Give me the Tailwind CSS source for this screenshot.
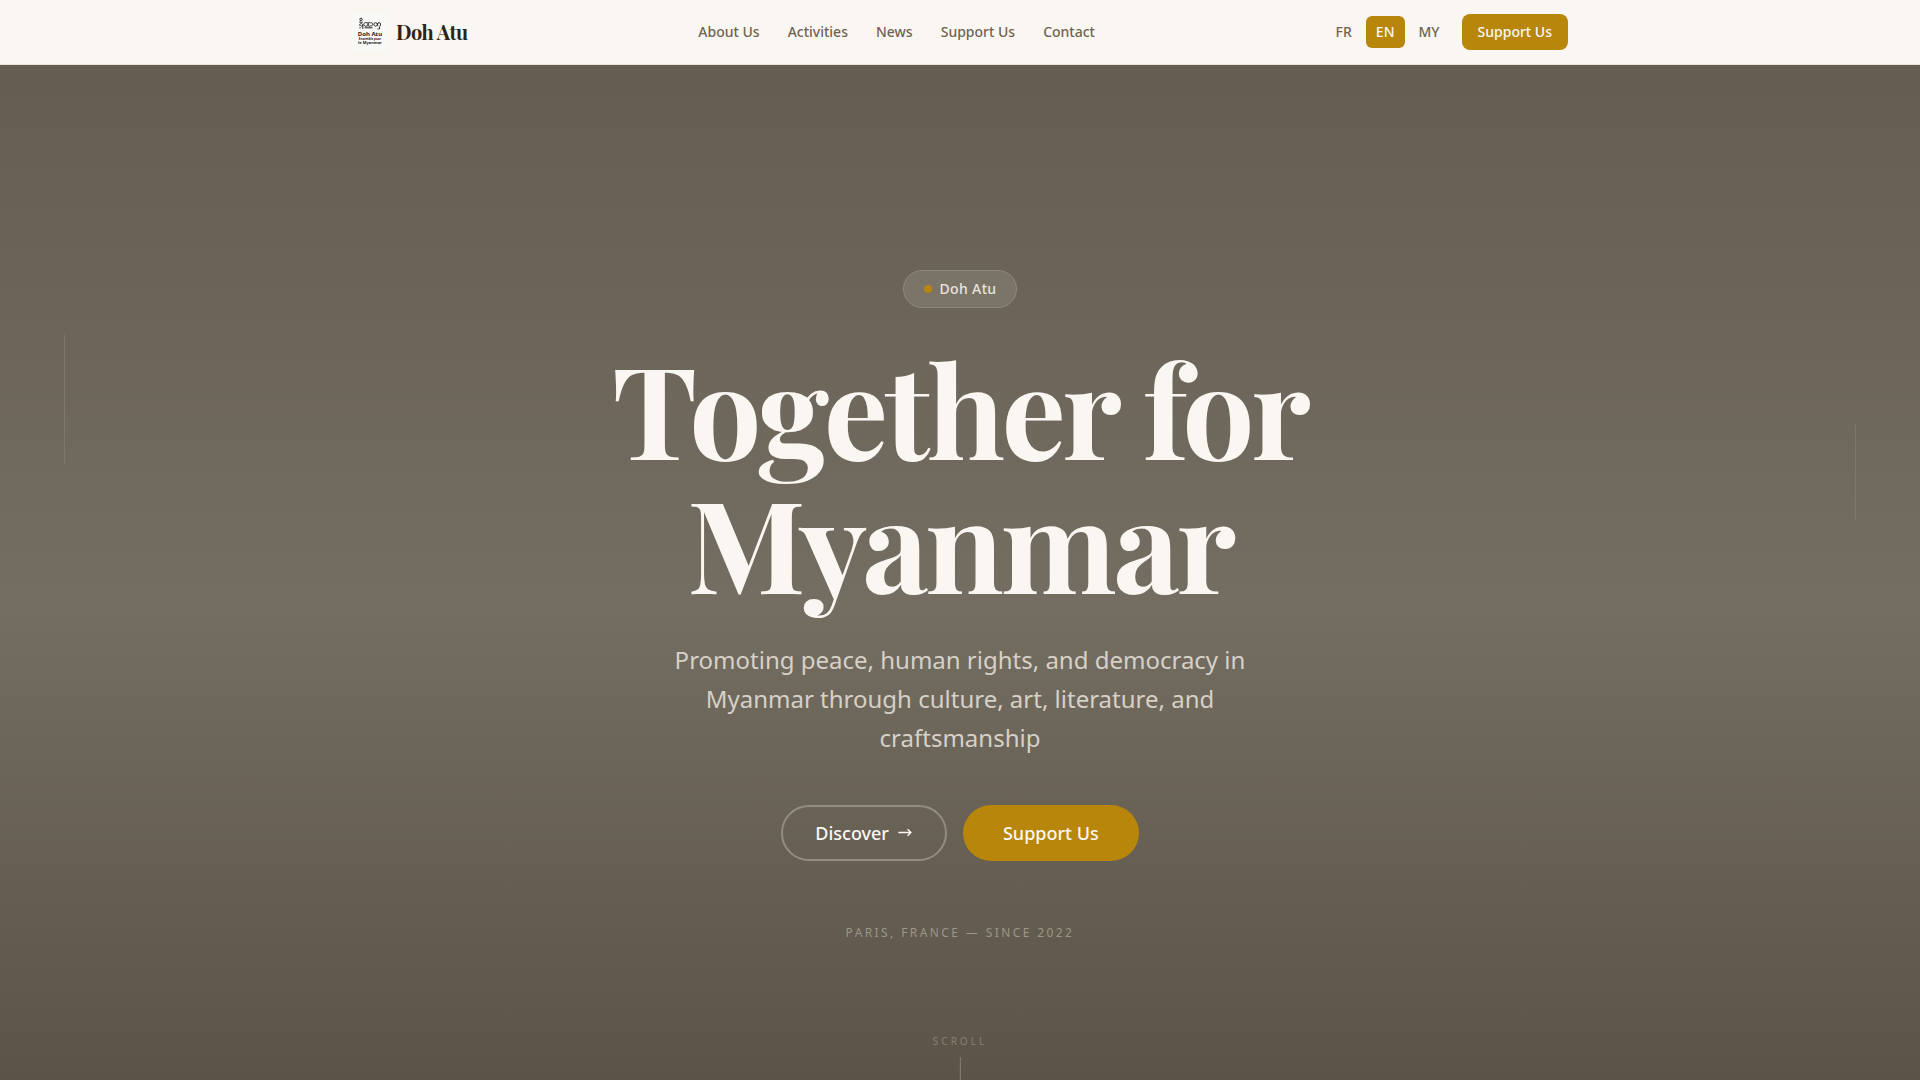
<!DOCTYPE html>
<html lang="en">
<head>
    <meta charset="UTF-8">
    <meta name="viewport" content="width=device-width, initial-scale=1.0">
    <title>Doh Atu - Together for Myanmar</title>
    <script src="https://cdn.jsdelivr.net/npm/@tailwindcss/browser@4"></script>
</head>
<body class="bg-[#faf7f2] font-['Noto_Sans',sans-serif] text-[#2c2416] antialiased">

<!-- Header -->
<header class="sticky top-0 z-10 border-b border-[#e8e2d8] bg-[#faf7f2]">
    <div class="mx-auto flex h-16 max-w-7xl items-center justify-between px-8">
        <a href="#" class="flex items-center gap-2">
            <svg class="size-9" viewBox="0 0 36 36" role="img" aria-label="Doh Atu logo">
                <rect width="36" height="36" fill="#f9f9f8"/>
                <g fill="none" stroke="#2a2a2a" stroke-width="1">
                    <circle cx="9" cy="5.4" r="1.2"/>
                    <path d="M7.2 8.2h3.6M7.4 11.5c0-2.4 3.4-2.4 3.4-.4 0 1.6-2.6 1.2-2.4 0M10.8 11v4M7.4 13.8h1.4"/>
                    <path d="M14.8 8.8a1.9 1.9 0 1 0 .1 3.1M14.8 8.8c2.4-.6 2.4 3.4.1 3.1M18.6 8.8a1.9 1.9 0 1 0 .1 3.1M18.6 8.8c2.8-.8 2.8 3.6.1 3.1M12.6 13.8h8"/>
                    <circle cx="23.6" cy="10.4" r="1.7"/>
                    <path d="M26.4 12.2c-1.4-1-1.2-3.6.6-3.6s2.2 2.4.8 3.6M27.6 12.4v2.8M25.4 15h1.4"/>
                </g>
                <g fill="#222" text-anchor="middle" font-family="Noto Sans, sans-serif" font-weight="700">
                    <text x="18" y="22" font-size="6">Doh Atu</text>
                    <text x="18" y="26" font-size="3">Ensemble pour</text>
                    <text x="18" y="30" font-size="4">le Myanmar</text>
                </g>
            </svg>
            <span class="font-['Playfair_Display','Liberation_Serif',serif] text-xl font-bold tracking-tight">Doh Atu</span>
        </a>

        <nav class="flex items-center gap-7 text-sm font-medium text-[#6f6353]">
            <a href="#about">About Us</a>
            <a href="#activities">Activities</a>
            <a href="#news">News</a>
            <a href="#support">Support Us</a>
            <a href="#contact">Contact</a>
        </nav>

        <div class="flex items-center gap-3 text-sm font-medium">
            <div class="flex items-center gap-1 text-[#6f6353]">
                <button type="button" class="h-8 rounded-md px-[10px]">FR</button>
                <button type="button" class="h-8 rounded-md bg-[#b8860b] px-[10px] text-[#faf7f2]">EN</button>
                <button type="button" class="h-8 rounded-md px-[10px]">MY</button>
            </div>
            <a href="#support" class="rounded-lg bg-[#b8860b] px-4 py-2 text-[#faf7f2]">Support Us</a>
        </div>
    </div>
</header>

<!-- Hero -->
<section class="relative flex h-screen flex-col items-center justify-center overflow-hidden bg-linear-to-b from-[#655d51] via-[#746d61] to-[#575043] px-6 text-center text-[#faf7f2]">
    <!-- Side lines -->
    <div class="absolute top-1/4 left-16 h-32 w-px bg-[#7b796d]"></div>
    <div class="absolute top-1/3 right-16 h-24 w-px bg-[#7b796d]"></div>

    <div class="flex items-center gap-2 rounded-full border border-[#8c8a7d] bg-white/10 px-5 py-2 text-sm font-medium tracking-wide text-[#e9e5de]">
        <span class="size-2 rounded-full bg-[#b8860b]"></span>
        Doh Atu
    </div>

    <h1 class="my-8 max-w-4xl font-['Playfair_Display','Liberation_Serif',serif] text-9xl leading-[134px] font-bold tracking-tight">Together for Myanmar</h1>

    <p class="max-w-xl text-2xl leading-[39px] text-[#d6d1c8]">Promoting peace, human rights, and democracy in Myanmar through culture, art, literature, and craftsmanship</p>

    <div class="mt-12 flex items-center gap-4 text-lg font-medium">
        <a href="#about" class="flex h-14 items-center gap-2 rounded-full border-2 border-[#928d80] px-8">
            Discover
            <svg class="size-4" viewBox="0 0 16 16" fill="none" stroke="currentColor" stroke-width="1.4" aria-hidden="true">
                <path d="M1.3 7.5h12.6M10.6 4.3l3.3 3.2-3.3 3.2"/>
            </svg>
        </a>
        <a href="#support" class="flex h-14 items-center rounded-full bg-[#b8860b] px-10">Support Us</a>
    </div>

    <p class="mt-16 text-xs tracking-[0.2em] text-[#9b968a] uppercase">Paris, France — Since 2022</p>

    <!-- Scroll hint -->
    <div class="absolute bottom-10 left-1/2 flex -translate-x-1/2 flex-col items-center gap-2">
        <span class="text-[10px] leading-4 tracking-[0.3em] text-[#858074] uppercase">Scroll</span>
        <span class="h-12 w-px bg-[#858074]"></span>
    </div>
</section>

</body>
</html>
